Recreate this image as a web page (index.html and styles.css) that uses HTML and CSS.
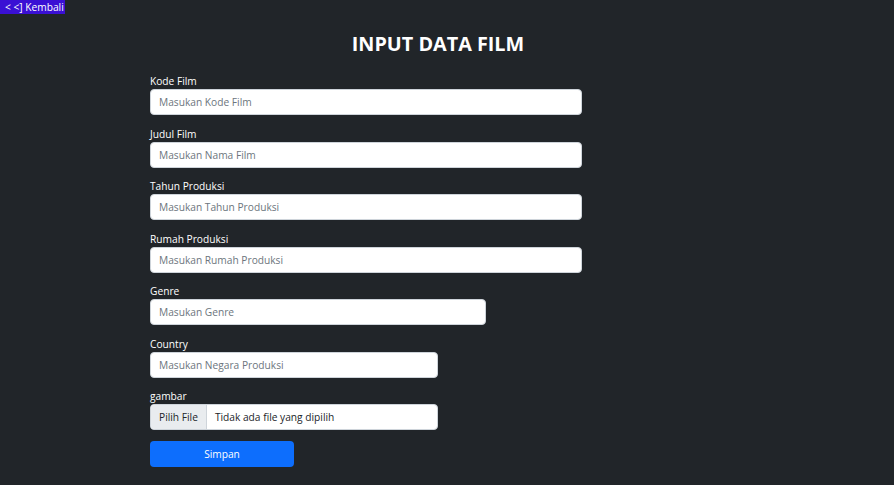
FILE: index.html
```html
<!DOCTYPE html>
<html lang="id">
<head>
<meta charset="utf-8">
<title>Input Data Film</title>
<link rel="stylesheet" href="styles.css">
</head>
<body>
<a class="back" href="#">&lt; &lt;] Kembali</a>
<h1 class="title">INPUT DATA FILM</h1>
<form class="form">
  <div class="group">
    <label class="label">Kode Film</label>
    <input class="control w-full" type="text" placeholder="Masukan Kode Film">
  </div>
  <div class="group">
    <label class="label">Judul Film</label>
    <input class="control w-full" type="text" placeholder="Masukan Nama Film">
  </div>
  <div class="group">
    <label class="label">Tahun Produksi</label>
    <input class="control w-full" type="text" placeholder="Masukan Tahun Produksi">
  </div>
  <div class="group">
    <label class="label">Rumah Produksi</label>
    <input class="control w-full" type="text" placeholder="Masukan Rumah Produksi">
  </div>
  <div class="group">
    <label class="label">Genre</label>
    <input class="control w-genre" type="text" placeholder="Masukan Genre">
  </div>
  <div class="group">
    <label class="label">Country</label>
    <input class="control w-country" type="text" placeholder="Masukan Negara Produksi">
  </div>
  <div class="group">
    <label class="label">gambar</label>
    <div class="file w-country">
      <span class="file-btn">Pilih File</span>
      <span class="file-name">Tidak ada file yang dipilih</span>
    </div>
  </div>
  <button class="btn" type="button">Simpan</button>
</form>
</body>
</html>
```

FILE: styles.css
```css
* { box-sizing: border-box; }
html, body { margin: 0; padding: 0; }
body {
  background: #212529;
  color: #fff;
  font-family: "Open Sans", "Noto Sans", sans-serif;
  font-size: 10.2px;
  width: 894px;
  height: 485px;
  overflow: hidden;
}
.back {
  display: inline-block;
  background: #3a10d4;
  color: #fff;
  text-decoration: none;
  font-size: 10.2px;
  line-height: 14px;
  padding: 0 1px 0 5px;
  vertical-align: top;
}
.title {
  margin: 17px 0 0 0;
  padding-right: 18px;
  text-align: center;
  font-size: 19.8px;
  font-weight: 700;
  line-height: 26px;
}
.form {
  width: 432px;
  margin: 15px 0 0 150px;
  display: flex;
  flex-direction: column;
  gap: 9.5px;
  align-items: flex-start;
}
.group {
  display: flex;
  flex-direction: column;
  gap: 1px;
  width: 100%;
}
.label {
  font-size: 10.2px;
  line-height: 14px;
  padding-top: 2px;
}
.control {
  height: 26px;
  border: 1px solid #ced4da;
  border-radius: 4px;
  background: #fff;
  padding: 0 8px;
  font-family: inherit;
  font-size: 10.2px;
  color: #212529;
  outline: none;
}
.control::placeholder { color: #6c757d; }
.w-full { width: 432px; }
.w-genre { width: 336px; }
.w-country { width: 288px; }
.file {
  height: 26px;
  border: 1px solid #ced4da;
  border-radius: 4px;
  background: #fff;
  display: flex;
  overflow: hidden;
  color: #212529;
}
.file-btn {
  background: #e9ecef;
  border-right: 1px solid #ced4da;
  padding: 0 8px;
  display: flex;
  align-items: center;
}
.file-name {
  padding: 0 8px;
  display: flex;
  align-items: center;
}
.btn {
  margin-top: 1.5px;
  width: 144px;
  height: 26px;
  border: none;
  border-radius: 4px;
  background: #0d6efd;
  color: #fff;
  font-family: inherit;
  font-size: 10.2px;
}
```
